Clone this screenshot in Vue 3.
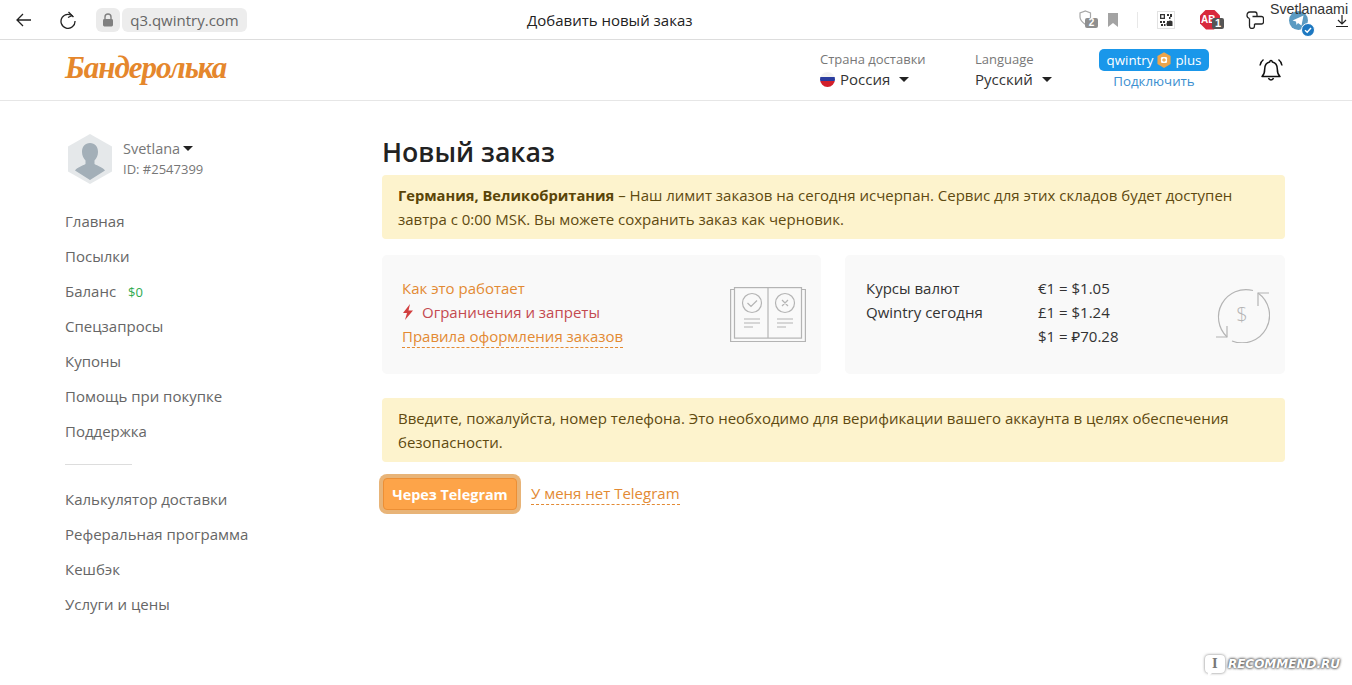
<template>
  <div class="page">
    <!-- browser toolbar -->
    <div class="browser-bar">
      <div class="bar-left">
        <svg class="ico back" viewBox="0 0 18 18" width="18" height="18"><path d="M16 9H2M8 3L2 9l6 6" fill="none" stroke="#222" stroke-width="1.3" /></svg>
        <svg class="ico reload" viewBox="0 0 18 18" width="18" height="18"><path d="M14.5 6A7 7 0 1 0 16 10" fill="none" stroke="#222" stroke-width="1.3" /><path d="M9.5 1l3.5 3.6L9 6.5" fill="none" stroke="#222" stroke-width="1.3" /></svg>
        <span class="lock-box">
          <svg viewBox="0 0 12 14" width="12" height="14"><path d="M3 6V4a3 3 0 0 1 6 0v2" fill="none" stroke="#808080" stroke-width="1.4" /><rect x="1" y="6" width="10" height="7.5" rx="1.4" fill="#808080" /></svg>
        </span>
        <span class="url-box">q3.qwintry.com</span>
      </div>
      <div class="bar-title">Добавить новый заказ</div>
      <div class="bar-right">
        <span class="ext shield">
          <svg viewBox="0 0 18 20" width="18" height="20"><path d="M6.500 1l5 2v4c0 2.500-1.500 5-5 7.500C3 12 1 9.500 1 7V3z" fill="none" stroke="#a8a8a8" stroke-width="1.2" /></svg>
          <b class="badge grey">2</b>
        </span>
        <svg class="bookmark" viewBox="0 0 10 14" width="10" height="14"><path d="M0 0h10v14L5 10l-5 4z" fill="#a3a3a3" /></svg>
        <i class="bar-sep"></i>
        <svg class="qr" viewBox="0 0 18 18" width="18" height="18">
          <rect x="0.500" y="0.500" width="17" height="17" fill="#fff" stroke="#e2e2e2" />
          <path d="M3 3h5v5H3zM4.300 4.300v2.400h2.400V4.300z M10 3h2v2h-2zM13 3h2v3h-1.500v2H12V6h1z M3 10h2v2H3zM6 10h2v2H6zM4 13h2v2H4zM7 13h1.500v2H7zM10 10h1.500v2H10z" fill="#333" fill-rule="evenodd" />
          <path d="M10 15a3.600 3.600 0 0 1 5.500-4.500V15z" fill="#333" />
        </svg>
        <span class="ext abp">
          <span class="abp-stop">AB</span>
          <b class="badge dark">1</b>
        </span>
        <svg class="puzzle" viewBox="0 0 18 18" width="18" height="18" fill="none" stroke="#222" stroke-width="1.300">
          <path d="M3.500 7.500C2 7 1 6 1 4.500 1 2.500 2 1 4 1h5c1.500 0 2 1 2 2.500v2" />
          <path d="M3.500 7.500V15c0 1.500 1 2.500 2.500 2.500s2.500-1 2.500-2.500v-2" />
          <path d="M8.500 13h7c1.200 0 2-.8 2-2V7.500c0-1.200-.8-2-2-2h-9" />
        </svg>
        <span class="ext tg">
          <svg viewBox="0 0 19 19" width="19" height="19"><circle cx="9.500" cy="9.500" r="9.500" fill="#5b9bc2" /><path d="M3.500 9.500l11-5-2 10-3.500-2.500-1.500 2-.5-3.500z" fill="#fff" /></svg>
          <svg class="tg-check" viewBox="0 0 14 14" width="14" height="14"><circle cx="7" cy="7" r="6.500" fill="#1d78c1" stroke="#fff" /><path d="M4 7.200l2.200 2L10 5" fill="none" stroke="#fff" stroke-width="1.400" /></svg>
        </span>
        <svg class="download" viewBox="0 0 12 14" width="12" height="14"><path d="M6 1v9M2 6l4 4 4-4M0 12.500h12" fill="none" stroke="#222" stroke-width="1.200" /></svg>
      </div>
      <span class="user-label">Svetlanaami</span>
    </div>

    <!-- site header -->
    <header class="site-header">
      <div class="logo">Бандеролька</div>
      <div class="selector country">
        <div class="sel-label">Страна доставки</div>
        <div class="sel-value">
          <span class="flag"></span>Россия<i class="caret"></i>
        </div>
      </div>
      <div class="selector language">
        <div class="sel-label">Language</div>
        <div class="sel-value">Русский<i class="caret"></i></div>
      </div>
      <div class="plus">
        <div class="plus-pill">
          qwintry
          <svg viewBox="0 0 16 18" width="14" height="16"><path d="M8 0l7.500 4.500v9L8 18l-7.500-4.500v-9z" fill="#efa54b" /><rect x="4.500" y="5.500" width="7" height="7" rx="1.500" fill="#fff" /><path d="M8 7v4M6 9h4" stroke="#efa54b" stroke-width="1.500" /></svg>
          plus
        </div>
        <a class="plus-link">Подключить</a>
      </div>
      <svg class="bell" viewBox="0 0 26 26" width="26" height="26">
        <path d="M13 3.500a1.300 1.300 0 0 1 1.300 1.400c3.500.8 5 3.500 5 7 0 3.500 1 6 2.700 7.600H4c1.700-1.600 2.700-4.100 2.700-7.600 0-3.500 1.500-6.200 5-7A1.300 1.300 0 0 1 13 3.500z" fill="none" stroke="#111" stroke-width="1.500" stroke-linejoin="round" />
        <path d="M10.500 21a2.600 2.600 0 0 0 5 0" fill="none" stroke="#111" stroke-width="1.500" />
        <path d="M5.500 2.500C3.500 4 2.300 6 2 8.500M20.500 2.500c2 1.500 3.200 3.500 3.500 6" fill="none" stroke="#111" stroke-width="1.500" />
      </svg>
    </header>

    <div class="content">
      <!-- sidebar -->
      <aside class="sidebar">
        <div class="profile">
          <svg class="avatar" viewBox="0 0 44 50" width="44" height="50">
            <path d="M22 0l22 12.500v25L22 50 0 37.500v-25z" fill="#e5e8ea" />
            <path d="M22 9c5 0 8 3.500 8 9 0 3.500-1.500 6.500-3.500 8.500v3.500c3 2 8 3 10.500 6.500L22 46 7 36.500c2.500-3.500 7.500-4.500 10.500-6.500v-3.500C15.500 24.500 14 21.500 14 18c0-5.500 3-9 8-9z" fill="#a3afb8" />
          </svg>
          <div>
            <div class="profile-name">Svetlana<i class="caret small"></i></div>
            <div class="profile-id">ID: #2547399</div>
          </div>
        </div>
        <nav class="menu">
          <a v-for="item in menuTop" :key="item" class="menu-item">
            {{ item }}<span v-if="item === 'Баланс'" class="balance">$0</span>
          </a>
          <hr class="menu-divider" />
          <a v-for="item in menuBottom" :key="item" class="menu-item">{{ item }}</a>
        </nav>
      </aside>

      <!-- main column -->
      <main class="main">
        <h1 class="title">Новый заказ</h1>
        <div class="alert">
          <b>Германия, Великобритания</b> – Наш лимит заказов на сегодня исчерпан. Сервис для этих складов будет доступен завтра с 0:00 MSK. Вы можете сохранить заказ как черновик.
        </div>

        <div class="cards">
          <section class="card rules">
            <div class="card-lines">
              <a class="orange">Как это работает</a>
              <a class="red">
                <svg viewBox="0 0 12 16" width="12" height="16"><path d="M8 0L1 9h4l-2 7 8-9.500H6.500z" fill="#d23f3f" /></svg>
                Ограничения и запреты
              </a>
              <a class="orange dashed">Правила оформления заказов</a>
            </div>
            <svg class="book" viewBox="0 0 76 56" width="76" height="56">
              <g fill="none" stroke="#b4b4b4" stroke-width="1.200">
                <path d="M4 2.500H.600v52h74.800v-52H72" />
                <rect x="4.500" y="0.600" width="67" height="50.500" />
                <path d="M38 0.600v50.500" />
                <circle cx="22" cy="16" r="9.500" />
                <circle cx="55" cy="16" r="9.500" />
                <path d="M17.500 16l3.500 3.500 6-6M52 13l6 6M58 13l-6 6" />
                <path d="M14 32h16M14 36h16M14 40h9M47 32h16M47 36h16M47 40h9" />
              </g>
            </svg>
          </section>
          <section class="card rates">
            <div class="rates-title">Курсы валют<br />Qwintry сегодня</div>
            <div class="rates-values">
              <div>€1 = $1.05</div>
              <div>£1 = $1.24</div>
              <div>$1 = ₽70.28</div>
            </div>
            <svg class="exchange" viewBox="0 0 56 56" width="56" height="56">
              <g fill="none" stroke="#b4b4b4" stroke-width="1.200">
                <path d="M39 3.500A27.500 27.500 0 0 0 13 50" />
                <path d="M44 6A27.500 27.500 0 0 1 18 54" />
                <path d="M2 50h11V39M55 6H44v13" />
              </g>
              <text x="28" y="35" text-anchor="middle" class="dollar">$</text>
            </svg>
          </section>
        </div>

        <div class="alert second">
          Введите, пожалуйста, номер телефона. Это необходимо для верификации вашего аккаунта в целях обеспечения безопасности.
        </div>

        <div class="actions">
          <button class="tg-btn">Через Telegram</button>
          <a class="orange dashed">У меня нет Telegram</a>
        </div>
      </main>
    </div>

    <div class="watermark">
      <span class="wm-badge">I</span>RECOMMEND.RU
    </div>
  </div>
</template>

<script setup>
const menuTop = ["Главная", "Посылки", "Баланс", "Спецзапросы", "Купоны", "Помощь при покупке", "Поддержка"];
const menuBottom = ["Калькулятор доставки", "Реферальная программа", "Кешбэк", "Услуги и цены"];
</script>

<style>
html, body { margin: 0; background: #fff; }
</style>

<style scoped>
.page { position: relative; width: 1352px; height: 685px; overflow: hidden; font-family: "Open Sans", "Noto Sans", sans-serif; font-size: 15px; color: #333; background: #fff; }
a { text-decoration: none; }

.browser-bar { position: relative; height: 40px; box-sizing: border-box; border-bottom: 1px solid #ddd; display: flex; align-items: center; }
.bar-left { width: 527px; display: flex; align-items: center; padding-left: 15px; box-sizing: border-box; }
.reload { margin-left: 26px; }
.lock-box { margin-left: 19px; width: 24px; height: 24px; border-radius: 6px; background: #ebebeb; display: flex; align-items: center; justify-content: center; }
.url-box { margin-left: 2px; width: 125px; height: 24px; line-height: 24px; text-align: center; border-radius: 6px; background: #ededed; color: #666; font-size: 15px; }
.bar-title { font-size: 15px; color: #222; }
.bar-right { margin-left: auto; display: flex; align-items: center; height: 40px; }
.ext { position: relative; display: block; }
.shield { width: 18px; height: 20px; margin-right: 11px; }
.badge { position: absolute; display: block; border-radius: 2px; color: #fff; font: bold 10px/10px "Liberation Sans", sans-serif; text-align: center; }
.badge.grey { left: 6px; top: 8px; width: 13px; height: 10px; background: #8f8f8f; }
.bookmark { margin-right: 19px; }
.bar-sep { width: 1px; height: 16px; background: #e8e8e8; margin-right: 19px; }
.qr { margin-right: 25px; }
.abp { width: 20px; height: 20px; margin-right: 26px; }
.abp-stop { display: block; width: 20px; height: 20px; clip-path: polygon(30% 0, 70% 0, 100% 30%, 100% 70%, 70% 100%, 30% 100%, 0 70%, 0 30%); background: #d8293c; color: #fff; font: bold 10px/20px "Liberation Sans", sans-serif; padding-left: 1px; box-sizing: border-box; }
.badge.dark { left: 12px; top: 8px; width: 12px; height: 11px; line-height: 11px; font-size: 11px; background: #555; }
.puzzle { margin-right: 25px; }
.tg { width: 19px; height: 19px; margin-right: 28px; margin-top: 1px; }
.tg svg { display: block; }
.tg-check { position: absolute; right: -7px; bottom: -7px; }
.download { margin-right: 4px; margin-top: 2px; }
.user-label { position: absolute; left: 1270px; top: 0; font: 14.2px/18px "Liberation Sans", sans-serif; color: #333; }

.site-header { height: 61px; box-sizing: border-box; border-bottom: 1px solid #e6e6e6; display: flex; align-items: center; padding-left: 65px; }
.logo { width: 755px; flex: none; margin-top: -4px; font: italic bold 31px/40px "Liberation Serif", serif; color: #e5872c; letter-spacing: -1px; }
.selector { flex: none; }
.country { width: 155px; }
.language { width: 124px; }
.sel-label { font-size: 13px; line-height: 18px; color: #777; }
.sel-value { font-size: 15px; line-height: 22px; color: #333; display: flex; align-items: center; }
.flag { width: 15px; height: 15px; border-radius: 50%; margin-right: 5px; background: linear-gradient(#f2f2f2 33%, #2a3c9e 33% 62%, #d21f2b 62%); }
.caret { display: inline-block; width: 0; height: 0; margin-left: 9px; border: 5px solid transparent; border-top-color: #222; border-bottom: 0; }
.caret.small { margin-left: 3px; vertical-align: 3px; }
.plus { width: 110px; flex: none; text-align: center; }
.plus-pill { height: 22px; border-radius: 5px; background: #1a97ea; color: #fff; font-size: 13.3px; display: flex; align-items: center; justify-content: center; gap: 4px; }
.plus-link { display: block; font-size: 13.3px; line-height: 20px; color: #3b8fd0; }
.bell { margin-left: 49px; flex: none; }

.content { display: flex; }
.sidebar { width: 382px; flex: none; box-sizing: border-box; padding: 33px 0 0 65px; }
.profile { display: flex; align-items: center; gap: 11px; margin-left: 3px; color: #777; }
.profile-name { font-size: 14.5px; line-height: 18px; margin-bottom: 2px; }
.profile-id { font-size: 13px; line-height: 18px; }
.menu { margin-top: 20px; display: flex; flex-direction: column; align-items: flex-start; }
.menu-item { height: 35px; line-height: 35px; color: #666; font-size: 15px; white-space: nowrap; }
.balance { margin-left: 12px; color: #2faa4f; font-size: 13px; }
.menu-divider { width: 67px; height: 1px; margin: 15px 0 17px; border: 0; background: #ddd; }

.main { width: 903px; flex: none; }
.title { margin: 33px 0 5px; font-size: 26.7px; line-height: 36px; font-weight: 600; color: #222; }
.alert { box-sizing: border-box; height: 64px; padding: 8px 16px; border-radius: 4px; background: #fdf3cd; color: #5f4a10; font-size: 15px; line-height: 24px; }
.alert b { font-size: 14.7px; font-weight: 700; color: #5a4508; }
.cards { display: flex; gap: 24px; margin: 16px 0 24px; }
.card { flex: 1; height: 119px; box-sizing: border-box; border-radius: 5px; background: #f9f9f9; display: flex; align-items: center; padding: 0 15px 0 21px; line-height: 24px; font-size: 15px; }
.rules { flex: 0 0 439px; padding-left: 20px; }
.card-lines { display: flex; flex-direction: column; align-items: flex-start; flex: 1; align-self: flex-start; margin-top: 21px; }
.orange { color: #e38a33; }
.red { color: #c44a50; display: flex; align-items: center; gap: 8px; }
.dashed { border-bottom: 1px dashed #e38a33; line-height: 21px; }
.card-lines .dashed { margin-top: 2px; }
.book { flex: none; }
.rates { color: #333; padding-right: 15px; }
.rates-title { width: 172px; flex: none; align-self: flex-start; margin-top: 21px; }
.rates-values { flex: 1; align-self: flex-start; margin-top: 21px; }
.exchange { flex: none; }
.dollar { font-size: 20px; font-weight: 300; fill: #b4b4b4; font-family: "Open Sans", sans-serif; }
.actions { display: flex; align-items: center; gap: 14px; margin-top: 16px; padding-left: 1px; }
.tg-btn { height: 32px; width: 134px; padding: 0; border: 1px solid #ec8f35; border-radius: 4px; background: #fda449; color: #fff; font-family: inherit; font-size: 14.4px; font-weight: 700; box-shadow: 0 0 0 4px #e8b478; }

.watermark { position: absolute; right: 12px; bottom: 12px; display: flex; align-items: center; gap: 3px; color: #fff; font: italic bold 12px/16px "DejaVu Sans", sans-serif; text-shadow: 0 0 3px #666, 0 0 3px #666, 0 0 2px #666; }
.wm-badge { position: relative; width: 20px; height: 18px; border-radius: 4px; background: #fff; color: #777; text-align: center; font: bold 12px/18px "DejaVu Serif", serif; box-shadow: 0 0 3px #777; text-shadow: none; }
.wm-badge::after { content: ""; position: absolute; left: 3px; bottom: -4px; border: 3px solid transparent; border-top-color: #fff; border-left-color: #fff; }
</style>
